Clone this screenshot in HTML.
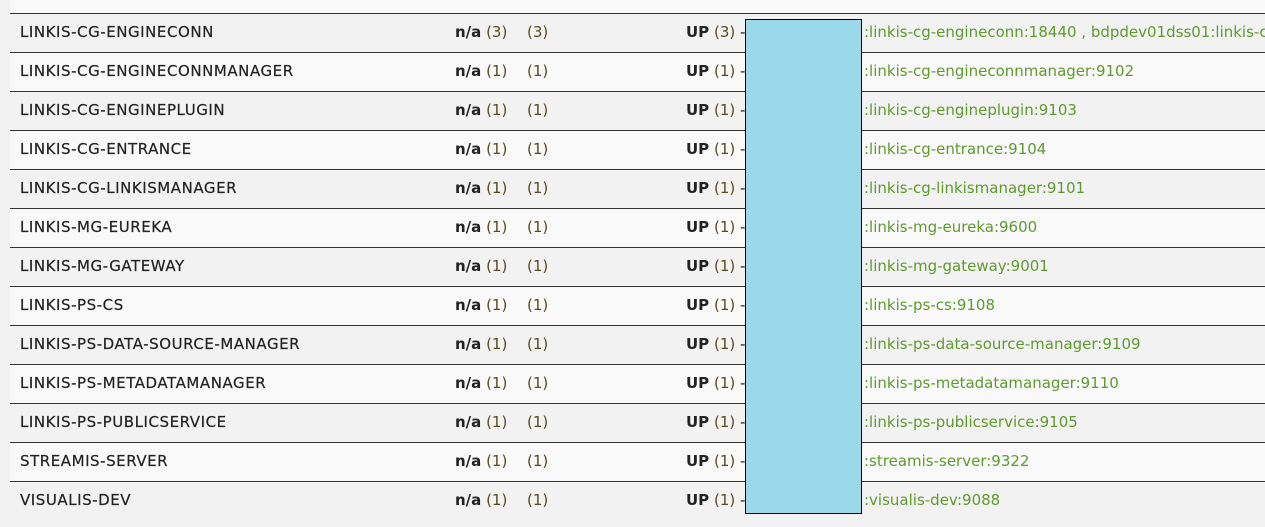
<!DOCTYPE html>
<html><head><meta charset="utf-8"><style>
html,body{margin:0;padding:0;width:1265px;height:527px;overflow:hidden;background:#f2f2f2;font-family:"DejaVu Sans",sans-serif;font-size:15px;color:#222}
.top{position:absolute;left:10px;right:0;top:0;height:13px;background:#f9f9f9;border-bottom:1px solid #333}
.row{position:absolute;left:10px;right:0;height:38px;border-bottom:1px solid #333;line-height:37px;white-space:nowrap;overflow:hidden}
.row>span{position:absolute;top:0}
.n{left:10px;letter-spacing:0.55px;-webkit-text-stroke:0.2px #222}
.a{left:445px}.b{left:517px}.u{left:676px}.l{left:854px;color:#5f9a2e;letter-spacing:0px}
b{font-weight:bold}
.p{color:#5a4a20;font-weight:normal}
.box{position:absolute;left:745px;top:19px;width:115px;height:493px;background:#9ad9ea;border:1px solid #000}
</style></head><body>
<div class="top"></div>
<div class="row" style="top:14px;background:#f2f2f2"><span class="n">LINKIS-CG-ENGINECONN</span><span class="a"><b>n/a</b> <span class="p">(3)</span></span><span class="b p">(3)</span><span class="u"><b>UP</b> <span class="p">(3)</span> -</span><span class="l">:linkis-cg-engineconn:18440 , bdpdev01dss01:linkis-cg-engineconn</span></div>
<div class="row" style="top:53px;background:#f9f9f9"><span class="n">LINKIS-CG-ENGINECONNMANAGER</span><span class="a"><b>n/a</b> <span class="p">(1)</span></span><span class="b p">(1)</span><span class="u"><b>UP</b> <span class="p">(1)</span> -</span><span class="l">:linkis-cg-engineconnmanager:9102</span></div>
<div class="row" style="top:92px;background:#f2f2f2"><span class="n">LINKIS-CG-ENGINEPLUGIN</span><span class="a"><b>n/a</b> <span class="p">(1)</span></span><span class="b p">(1)</span><span class="u"><b>UP</b> <span class="p">(1)</span> -</span><span class="l">:linkis-cg-engineplugin:9103</span></div>
<div class="row" style="top:131px;background:#f9f9f9"><span class="n">LINKIS-CG-ENTRANCE</span><span class="a"><b>n/a</b> <span class="p">(1)</span></span><span class="b p">(1)</span><span class="u"><b>UP</b> <span class="p">(1)</span> -</span><span class="l">:linkis-cg-entrance:9104</span></div>
<div class="row" style="top:170px;background:#f2f2f2"><span class="n">LINKIS-CG-LINKISMANAGER</span><span class="a"><b>n/a</b> <span class="p">(1)</span></span><span class="b p">(1)</span><span class="u"><b>UP</b> <span class="p">(1)</span> -</span><span class="l">:linkis-cg-linkismanager:9101</span></div>
<div class="row" style="top:209px;background:#f9f9f9"><span class="n">LINKIS-MG-EUREKA</span><span class="a"><b>n/a</b> <span class="p">(1)</span></span><span class="b p">(1)</span><span class="u"><b>UP</b> <span class="p">(1)</span> -</span><span class="l">:linkis-mg-eureka:9600</span></div>
<div class="row" style="top:248px;background:#f2f2f2"><span class="n">LINKIS-MG-GATEWAY</span><span class="a"><b>n/a</b> <span class="p">(1)</span></span><span class="b p">(1)</span><span class="u"><b>UP</b> <span class="p">(1)</span> -</span><span class="l">:linkis-mg-gateway:9001</span></div>
<div class="row" style="top:287px;background:#f9f9f9"><span class="n">LINKIS-PS-CS</span><span class="a"><b>n/a</b> <span class="p">(1)</span></span><span class="b p">(1)</span><span class="u"><b>UP</b> <span class="p">(1)</span> -</span><span class="l">:linkis-ps-cs:9108</span></div>
<div class="row" style="top:326px;background:#f2f2f2"><span class="n">LINKIS-PS-DATA-SOURCE-MANAGER</span><span class="a"><b>n/a</b> <span class="p">(1)</span></span><span class="b p">(1)</span><span class="u"><b>UP</b> <span class="p">(1)</span> -</span><span class="l">:linkis-ps-data-source-manager:9109</span></div>
<div class="row" style="top:365px;background:#f9f9f9"><span class="n">LINKIS-PS-METADATAMANAGER</span><span class="a"><b>n/a</b> <span class="p">(1)</span></span><span class="b p">(1)</span><span class="u"><b>UP</b> <span class="p">(1)</span> -</span><span class="l">:linkis-ps-metadatamanager:9110</span></div>
<div class="row" style="top:404px;background:#f2f2f2"><span class="n">LINKIS-PS-PUBLICSERVICE</span><span class="a"><b>n/a</b> <span class="p">(1)</span></span><span class="b p">(1)</span><span class="u"><b>UP</b> <span class="p">(1)</span> -</span><span class="l">:linkis-ps-publicservice:9105</span></div>
<div class="row" style="top:443px;background:#f9f9f9"><span class="n">STREAMIS-SERVER</span><span class="a"><b>n/a</b> <span class="p">(1)</span></span><span class="b p">(1)</span><span class="u"><b>UP</b> <span class="p">(1)</span> -</span><span class="l">:streamis-server:9322</span></div>
<div class="row" style="top:482px;background:#f2f2f2;border-bottom:none"><span class="n">VISUALIS-DEV</span><span class="a"><b>n/a</b> <span class="p">(1)</span></span><span class="b p">(1)</span><span class="u"><b>UP</b> <span class="p">(1)</span> -</span><span class="l">:visualis-dev:9088</span></div>
<div class="box"></div>
</body></html>
